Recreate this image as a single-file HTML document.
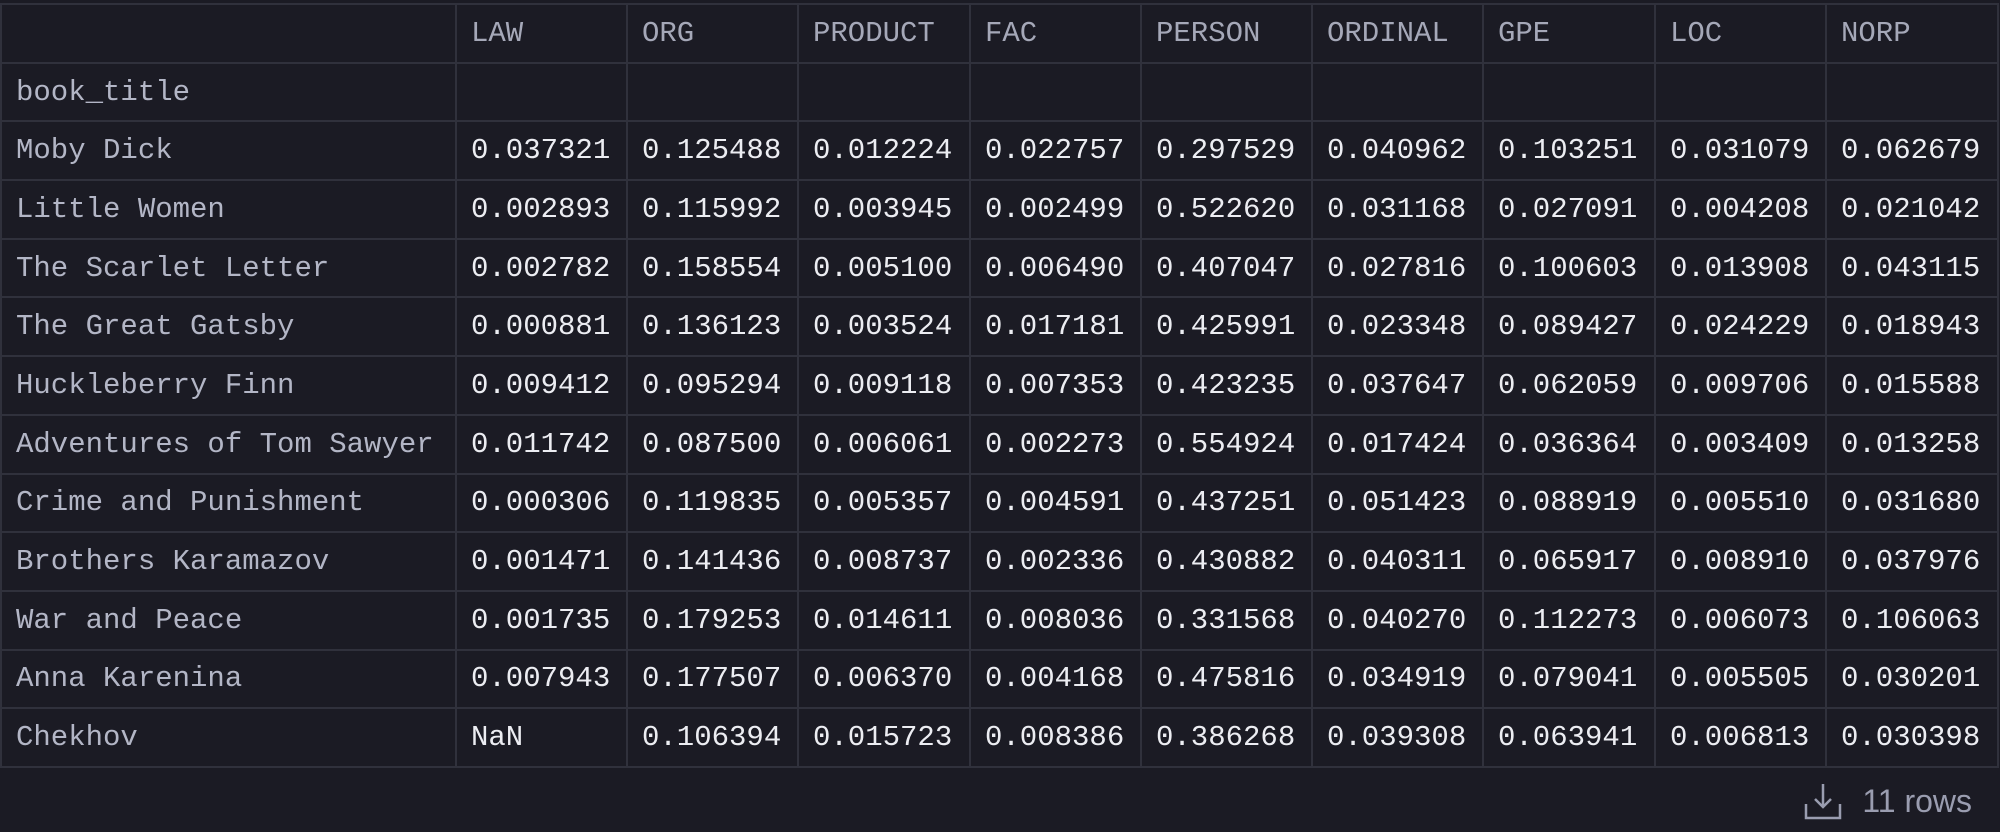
<!DOCTYPE html>
<html><head><style>
html,body{margin:0;padding:0;background:#1b1b24;width:2000px;height:832px;overflow:hidden}
table{position:absolute;left:0;top:3px;border-collapse:collapse;font-family:"Liberation Mono",monospace;font-size:29px;table-layout:fixed}
td{border:2px solid #30313c;height:56.7px;padding:0 0 0 14px;white-space:nowrap;color:#ecedf2;overflow:hidden}
tr:first-child td{color:#a5a8b8}
td.i{color:#b3b6c6}
.f{position:absolute;right:28px;top:782px;font-family:"Liberation Sans",sans-serif;font-size:32px;color:#9a9db0;display:flex;align-items:center;gap:20px}
</style></head><body>
<table>
<colgroup><col style="width:455px"><col style="width:171px"><col style="width:171px"><col style="width:172px"><col style="width:171px"><col style="width:171px"><col style="width:171px"><col style="width:172px"><col style="width:171px"><col style="width:172px"></colgroup>
<tr><td></td><td>LAW</td><td>ORG</td><td>PRODUCT</td><td>FAC</td><td>PERSON</td><td>ORDINAL</td><td>GPE</td><td>LOC</td><td>NORP</td></tr>
<tr><td class="i">book_title</td><td></td><td></td><td></td><td></td><td></td><td></td><td></td><td></td><td></td></tr>
<tr><td class="i">Moby Dick</td><td>0.037321</td><td>0.125488</td><td>0.012224</td><td>0.022757</td><td>0.297529</td><td>0.040962</td><td>0.103251</td><td>0.031079</td><td>0.062679</td></tr>
<tr><td class="i">Little Women</td><td>0.002893</td><td>0.115992</td><td>0.003945</td><td>0.002499</td><td>0.522620</td><td>0.031168</td><td>0.027091</td><td>0.004208</td><td>0.021042</td></tr>
<tr><td class="i">The Scarlet Letter</td><td>0.002782</td><td>0.158554</td><td>0.005100</td><td>0.006490</td><td>0.407047</td><td>0.027816</td><td>0.100603</td><td>0.013908</td><td>0.043115</td></tr>
<tr><td class="i">The Great Gatsby</td><td>0.000881</td><td>0.136123</td><td>0.003524</td><td>0.017181</td><td>0.425991</td><td>0.023348</td><td>0.089427</td><td>0.024229</td><td>0.018943</td></tr>
<tr><td class="i">Huckleberry Finn</td><td>0.009412</td><td>0.095294</td><td>0.009118</td><td>0.007353</td><td>0.423235</td><td>0.037647</td><td>0.062059</td><td>0.009706</td><td>0.015588</td></tr>
<tr><td class="i">Adventures of Tom Sawyer</td><td>0.011742</td><td>0.087500</td><td>0.006061</td><td>0.002273</td><td>0.554924</td><td>0.017424</td><td>0.036364</td><td>0.003409</td><td>0.013258</td></tr>
<tr><td class="i">Crime and Punishment</td><td>0.000306</td><td>0.119835</td><td>0.005357</td><td>0.004591</td><td>0.437251</td><td>0.051423</td><td>0.088919</td><td>0.005510</td><td>0.031680</td></tr>
<tr><td class="i">Brothers Karamazov</td><td>0.001471</td><td>0.141436</td><td>0.008737</td><td>0.002336</td><td>0.430882</td><td>0.040311</td><td>0.065917</td><td>0.008910</td><td>0.037976</td></tr>
<tr><td class="i">War and Peace</td><td>0.001735</td><td>0.179253</td><td>0.014611</td><td>0.008036</td><td>0.331568</td><td>0.040270</td><td>0.112273</td><td>0.006073</td><td>0.106063</td></tr>
<tr><td class="i">Anna Karenina</td><td>0.007943</td><td>0.177507</td><td>0.006370</td><td>0.004168</td><td>0.475816</td><td>0.034919</td><td>0.079041</td><td>0.005505</td><td>0.030201</td></tr>
<tr><td class="i">Chekhov</td><td>NaN</td><td>0.106394</td><td>0.015723</td><td>0.008386</td><td>0.386268</td><td>0.039308</td><td>0.063941</td><td>0.006813</td><td>0.030398</td></tr>
</table>
<div class="f"><svg width="38" height="38" viewBox="0 0 38 38" fill="none" stroke="#9a9db0" stroke-width="2.5"><path d="M2 22V36H36V22M19 2V25M11 17L19 25L27 17"/></svg><span>11 rows</span></div>
</body></html>
